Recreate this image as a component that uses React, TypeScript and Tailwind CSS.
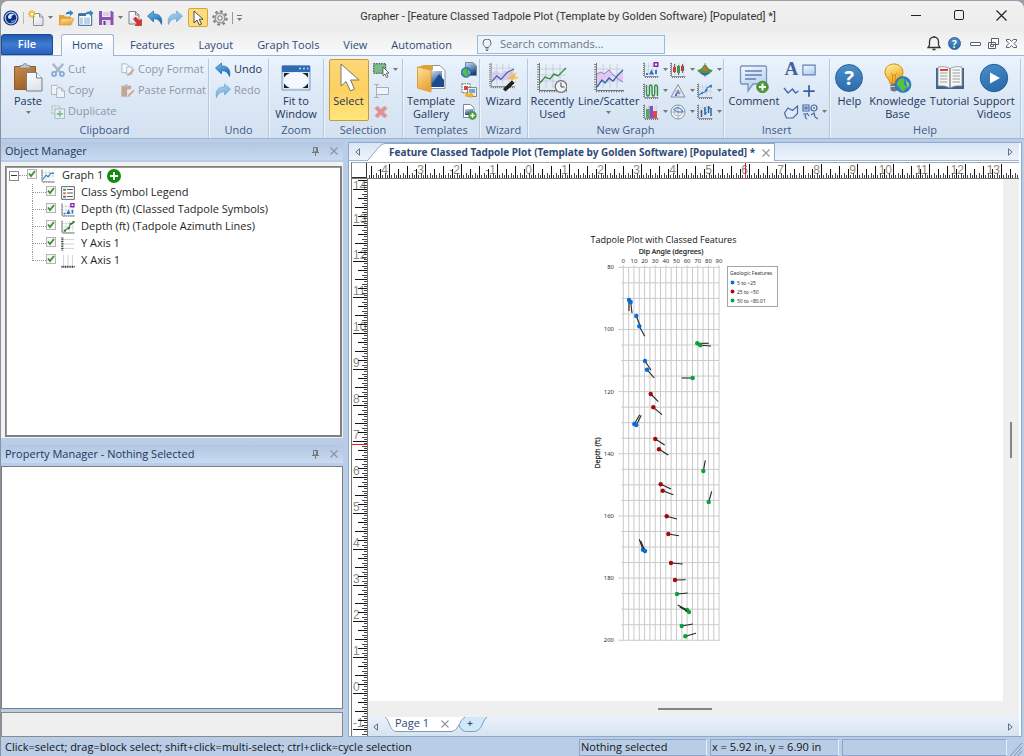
import { useLayoutEffect, useRef, useState, type ReactNode } from 'react';
import clsx from 'clsx';

/* ---------- icons ---------- */

interface IconProps {
  children: ReactNode;
  size?: 'sm' | 'md' | 'lg';
  dim?: boolean;
}

function Icon({ children, size = 'md', dim }: IconProps) {
  return (
    <svg
      aria-hidden="true"
      viewBox={size === 'lg' ? '0 0 30 30' : '0 0 16 16'}
      className={clsx('shrink-0', size === 'lg' ? 'size-[30px]' : size === 'md' ? 'size-4' : 'size-3.5', dim && 'opacity-50')}
      fill="none"
    >
      {children}
    </svg>
  );
}

function Gradients() {
  const list = [
    ['g-folder', '#ffe3a0', '#e8a63a'],
    ['g-clip', '#c98a4d', '#a06428'],
    ['g-paper', '#ffffff', '#dfe3ea'],
    ['g-rect', '#f4f9ff', '#b9d3ee'],
    ['g-bulb', '#fff6a8', '#f0a216'],
    ['g-arrow', '#7cc3ee', '#1c6cb5'],
    ['g-arrow2', '#b9dcf3', '#6ea7d6'],
    ['g-speech', '#f4f9ff', '#b9cdea'],
    ['g-help', '#4a90cb', '#2b6cab'],
    ['g-photo', '#cfe6f8', '#17407c'],
  ];
  return (
    <svg aria-hidden="true" className="absolute size-0">
      <defs>
        {list.map(([id, from, to]) => (
          <linearGradient key={id} id={id} x1="0" y1="0" x2="0.4" y2="1">
            <stop offset="0" stopColor={from} />
            <stop offset="1" stopColor={to} />
          </linearGradient>
        ))}
      </defs>
    </svg>
  );
}

const undoPath = 'M.5 6 6.500 1v3C12 3.500 16 7 14.500 14.500 13 10.500 10.500 8.500 6.500 8.800V12z';
const redoPath = 'M15.500 6 9.500 1v3C4 3.500 0 7 1.500 14.500 3 10.500 5.500 8.500 9.500 8.800V12z';
const cursorPath = 'M4 1v12l3-3 2.3 5 2.2-1-2.3-4.8H13z';

const UndoIcon = () => (
  <Icon><path d={undoPath} fill="url(#g-arrow)" stroke="#1f66a8" strokeWidth=".7" /></Icon>
);
const RedoIcon = () => (
  <Icon><path d={redoPath} fill="url(#g-arrow2)" stroke="#6fa2cf" strokeWidth=".7" /></Icon>
);

const LogoIcon = () => (
  <Icon>
    <circle cx="8" cy="8" r="7.6" fill="#16307e" />
    <circle cx="8" cy="8" r="6.4" fill="#a9c9e6" />
    <circle cx="8" cy="8" r="5.2" fill="#0d2a86" />
    <path d="M5 7C5 4 9 2.6 11.5 5 9 4.6 8.3 6 8.6 8 7 9.5 5 9 5 7z" fill="#d3ecfb" />
    <path d="M8 12.5c2.5.3 4.6-1.3 5-4-1.2 1.6-3 2.4-5 2z" fill="#4f8fd8" />
  </Icon>
);
const NewIcon = () => (
  <Icon>
    <path d="M5.5 3.5h6l3.500 3.500v8.500H5.500z" fill="url(#g-paper)" stroke="#8a8f98" />
    <path d="M11.500 3.500V7H15" stroke="#8a8f98" />
    <path d="M4 0v8M0 4h8M1.200 1.200l5.600 5.600M6.800 1.200 1.200 6.800" stroke="#e8b21c" strokeWidth="1.300" />
    <circle cx="4" cy="4" r="1.500" fill="#fff" />
  </Icon>
);
const OpenIcon = () => (
  <Icon>
    <path d="M1 5h5l1 1.500h6V15H1z" fill="#e6a23a" />
    <path d="M3.500 8.500H16L13 15H1z" fill="url(#g-folder)" stroke="#d8952d" strokeWidth=".6" />
    <path d="M7.500 4.500C8 2 10 1 12 1.500V0l3.500 3-3.500 3V4.200c-1.500-.5-3-.4-4.500.3z" fill="#2f86c6" />
  </Icon>
);
const OpenTemplateIcon = () => (
  <Icon>
    <path d="M.7 3.700h13v11.600H.7z" fill="#fff" stroke="#34618f" />
    <path d="M1 4h7v2H1z" fill="#3d6fa3" />
    <path d="M2 7.500h3v6.500H2zM6 7.500h6V14H6z" fill="#b9d3ea" />
    <path d="M7 4.500C7.500 2 10 1 12 1.500V0l3.500 3-3.500 3V4.200c-2-.5-3-.4-5 .3z" fill="#2f86c6" />
  </Icon>
);
const SaveIcon = () => (
  <Icon>
    <path d="M1 1h13l1.500 1.500V15H1z" fill="#8a55ad" />
    <path d="M4 1h8.500v6H4z" fill="#f1e9f6" />
    <path d="M5 3h6.500M5 5h6.500" stroke="#c9b4d8" />
    <path d="M4 10h8.500v5H4z" fill="#e4d8ec" />
    <path d="M5.500 11h2v4h-2z" fill="#6a3b8c" />
  </Icon>
);
const ExportIcon = () => (
  <Icon>
    <path d="M2 1.500h6.500L12 5v9H2z" fill="url(#g-paper)" stroke="#7d828c" />
    <path d="M8.500 1.500V5H12" stroke="#7d828c" />
    <path d="m6.500 9 2-2 4 4L14.500 9v6.500H8l2-2z" fill="#e0302c" stroke="#a81716" strokeWidth=".6" />
  </Icon>
);
const CursorIcon = () => (
  <Icon><path d={cursorPath} fill="#fff" stroke="#3a3a3a" strokeWidth=".9" /></Icon>
);
const GearIcon = () => (
  <Icon>
    <circle cx="8" cy="8" r="6.700" stroke="#777" strokeWidth="2" strokeDasharray="2.600 2.660" />
    <circle cx="8" cy="8" r="5" fill="#ddd" stroke="#777" strokeWidth="1" />
    <circle cx="8" cy="8" r="2.200" fill="#f3f3f3" stroke="#777" />
  </Icon>
);

const PasteIcon = () => (
  <Icon size="lg">
    <path d="M1.500 3.500h21v23h-21z" fill="url(#g-clip)" stroke="#8a5a2a" />
    <path d="M7 5V2.500h3a2 2 0 0 1 4 0h3V5z" fill="#c3c8cf" stroke="#7d828a" strokeWidth=".8" />
    <path d="M13.500 9.500h10l5.500 5.500v13H13.500z" fill="url(#g-paper)" stroke="#777e89" />
    <path d="M23.500 9.500V15H29" fill="#fff" stroke="#777e89" />
  </Icon>
);
const CutIcon = () => (
  <Icon size="sm" dim>
    <path d="M2 1 11 11M14 1 5 11" stroke="#6b7f99" strokeWidth="2.600" />
    <circle cx="3.500" cy="12.500" r="2.300" stroke="#2d68b5" strokeWidth="2" />
    <circle cx="12.500" cy="12.500" r="2.300" stroke="#2d68b5" strokeWidth="2" />
  </Icon>
);
const CopyIcon = () => (
  <Icon size="sm" dim>
    <path d="M.5 1.500H7L9.500 4v8h-9z" fill="#fff" stroke="#6f7680" />
    <path d="M6.500 4.500H12L15.500 8v7.500h-9z" fill="#fff" stroke="#6f7680" />
    <path d="M12 4.500V8h3.500" stroke="#6f7680" />
  </Icon>
);
const DuplicateIcon = () => (
  <Icon size="sm" dim>
    <path d="M1 1h9v9H1z" stroke="#777" strokeDasharray="2 1" />
    <path d="M4.500 4.500h11v11h-11z" fill="#f3fbf3" stroke="#6a7d74" />
    <path d="M10 6.500v7M6.500 10h7" stroke="#2f9437" strokeWidth="2" />
  </Icon>
);
const CopyFormatIcon = () => (
  <Icon size="sm" dim>
    <path d="M1 1h5.500L9 3.500V11H1z" fill="#fff" stroke="#6f7680" />
    <path d="M6.500 4.500h6V13h-6z" fill="#fff" stroke="#6f7680" />
    <path d="m7 15.500 1.500-3.500L14 6.500 15.500 8 10 13.500z" fill="#c9544d" />
  </Icon>
);
const PasteFormatIcon = () => (
  <Icon size="sm" dim>
    <path d="M.5 2h11v12.500H.5z" fill="#a9672c" />
    <path d="M4 .5h4v3H4z" fill="#8c929a" />
    <path d="M7 6h7v8.500H7z" fill="#e9edf2" />
    <path d="m7 15.500 1.500-3.500L14 6.500 15.500 8 10 13.500z" fill="#c9544d" />
  </Icon>
);
const FitIcon = () => (
  <Icon size="lg">
    <path d="M1 3h28v24H1z" fill="#d6e4f5" stroke="#7c9cc4" />
    <path d="M1 3.500Q1 2.500 2 2.500h26q1 0 1 1V9H1z" fill="#2f6bb0" />
    <path d="M18 5.500h2M22 5.500h2M26 5.500h1.500" stroke="#bcd6f2" strokeWidth="1.300" />
    <path d="M3 10h24v15H3z" fill="#1e1e1e" />
    <path d="M15 9.500c8 0 12.500 3.500 12.500 8S23 25.500 15 25.500 2.500 22 2.500 17.500s4.500-8 12.500-8z" fill="#f2f8ff" />
    <path d="M9 10h12l6 5v5l-6 5H9l-6-5v-5z" fill="#f5f9ff" />
  </Icon>
);
const SelectIcon = () => (
  <Icon size="lg">
    <path d="M7 1v22l5-4.500L16.500 28l4-2-4-9h8.500z" fill="#fff" stroke="#6a6a6a" strokeWidth=".9" />
  </Icon>
);
const BlockSelectIcon = () => (
  <Icon>
    <path d="M.7 1.700h12v9.600H.7z" fill="#7fb98c" stroke="#2b4a30" strokeDasharray="1.500 1" />
    <path d="M10 5v9l2-2 1.500 3.500 1.500-.8L13.500 11H16z" fill="#fff" stroke="#333" strokeWidth=".7" />
  </Icon>
);
const RenameIcon = () => (
  <Icon dim>
    <path d="M3.500 4.500h12v7h-12z" fill="#fff" stroke="#777" />
    <path d="M3.500 1.500v13M1 1.500h5M1 14.500h5" stroke="#777" />
  </Icon>
);
const DeleteIcon = () => (
  <Icon dim><path d="M2 4.500 4.500 2 8 5.500 11.500 2 14 4.500 10.500 8l3.500 3.500-2.500 2.500L8 10.500 4.500 14 2 11.500 5.500 8z" fill="#e63b3b" stroke="#d66" /></Icon>
);
const GalleryIcon = () => (
  <Icon size="lg">
    <path d="M9 2.500h15l5 5v18H9z" fill="#fff" stroke="#8b939f" />
    <path d="M13 8h13v15H13z" fill="url(#g-photo)" />
    <path d="m14 24 9-13 5 6v7z" fill="#1b4b8e" />
    <path d="M1.500 4 8 2h9v5l-2 1v20L1.500 25z" fill="#e0a23a" />
    <path d="M1.500 4 15 7v22L1.500 25z" fill="url(#g-folder)" stroke="#d8952d" strokeWidth=".8" />
  </Icon>
);
const Globe = ({ cx, cy, r }: { cx: number; cy: number; r: number }) => (
  <g>
    <circle cx={cx} cy={cy} r={r} fill="#2f7dd0" stroke="#1d5597" strokeWidth=".5" />
    <path
      d={`M${cx - r * 0.8} ${cy}q${r * 0.3} ${-r} ${r} ${-r * 0.7}l${-r * 0.1} ${r * 0.7}l${r * 0.4} ${r * 0.3}l${-r * 0.5} ${r * 0.6}z`}
      fill="#5cc13a"
    />
    <path d={`M${cx + r * 0.3} ${cy - r * 0.6}l${r * 0.5} ${r * 0.5}l${-r * 0.2} ${r * 0.6}z`} fill="#8ad957" />
  </g>
);
const GlobeFileIcon = () => (
  <Icon>
    <path d="M4.500.5H12L15.500 4v9.500h-11z" fill="url(#g-photo)" stroke="#7b8796" />
    <Globe cx={5} cy={10.5} r={5} />
  </Icon>
);
const SwapFileIcon = () => (
  <Icon>
    <path d="M1 .8h8v9H1z" fill="#fff" stroke="#555" strokeDasharray="1.500 1" />
    <path d="M6.500 4.500h9v9h-9z" fill="#e9f0f7" stroke="#888" />
    <path d="M8 6h6v4H8z" fill="#6fa6d6" />
    <path d="M3 3h4v4H3z" fill="#d04a45" />
    <path d="M4 10.500h5V8.500l4 3.500-4 3.500v-2H4z" fill="#f0b52b" />
  </Icon>
);
const AddFileIcon = () => (
  <Icon>
    <path d="M2.500.5h7L13 4v9.500H2.500z" fill="#fff" stroke="#7b8796" />
    <path d="M4 5h8v6H4z" fill="url(#g-photo)" />
    <circle cx="11.500" cy="11.500" r="4.200" fill="#4f9a3a" />
    <path d="M11.500 9.300v4.400M9.300 11.500h4.400" stroke="#fff" strokeWidth="1.500" />
  </Icon>
);

const PlotFrame = () => (
  <>
    <path d="M3 6h26M3 12h26M3 18h26M9 1v24M16 1v24M23 1v24" stroke="#c5cbd4" strokeWidth=".9" />
    <path d="M2.500 0v27.500H30" stroke="#777" />
    <path d="M1 1v26M2 28.500h28" stroke="#666" strokeWidth="1.600" strokeDasharray="1 1.500" />
  </>
);
const WizardIcon = () => (
  <Icon size="lg">
    <g transform="scale(.86)">
      <PlotFrame />
      <path d="m3 13 5-5 6 5 5-5 5 3 5-5v14H3z" fill="#d9c0ee" opacity=".8" />
      <path d="m3 22 6-7 5 4 7-8 8-4" stroke="#3a6ea8" strokeWidth="1.500" />
    </g>
    <path d="m22 8 1.500 4L28 9l-2 4 4 2-4 1 2 3-4-2-2 3v-4l-4-1 4-2z" fill="#f6b93b" opacity=".85" />
    <path d="m14.500 26 10-9.500 2 2-10 9.500z" fill="#222" stroke="#111" />
    <path d="m23 17.500 2-2 2.500 2.500-2 2z" fill="#eee" />
  </Icon>
);
const RecentIcon = () => (
  <Icon size="lg">
    <PlotFrame />
    <path d="m3 20 5-6 5 2 4-5 4 2 8-8" stroke="#3f8a48" strokeWidth="1.400" />
    <circle cx="24" cy="23.500" r="5.800" fill="#f2f2f2" stroke="#6f7378" strokeWidth="1.300" />
    <path d="M24 19.500V24h3.500" stroke="#444" />
  </Icon>
);
const LineScatterIcon = () => (
  <Icon size="lg">
    <PlotFrame />
    <path d="m3 11 4-2 3 2 5-4 5 6 4 3 5 3V7l-5 7-4-3-6 9-4-4-4 4-3 2z" fill="#e0c8f3" />
    <path d="m3 11 4-2 3 2 5-4 5 6 4 3 5 3" stroke="#a76ed0" />
    <path d="m3 24 5-7 3 3 4-5 4 3 5-6 5-5" stroke="#2f64a4" strokeWidth="1.300" />
  </Icon>
);

const MiniFrame = () => (
  <>
    <path d="M2 4h13M2 8h13M5.500 1v12M9.500 1v12M13.500 1v12" stroke="#cdd2da" strokeWidth=".8" />
    <path d="M1.500.5v14H15.500" stroke="#8a8f96" />
    <path d="M.5 1v13M2 15.500h13.500" stroke="#777" strokeDasharray="1 1" />
  </>
);
const ClassIcon = ({ size = 'md' }: { size?: 'sm' | 'md' }) => (
  <Icon size={size}>
    <MiniFrame />
    <path d="M10.500 0h5v5h-5z" fill="#8a1fb2" /><path d="M12 1.500h2v2h-2z" fill="#fff" />
    <path d="m6 12.500 2.500-5 2.500 5z" fill="#2f6fc0" /><path d="M3 11h2v2H3zM12 8h2v4h-2z" fill="#3a78c4" />
  </Icon>
);
const BoxIcon = () => (
  <Icon>
    <MiniFrame />
    <path d="M4.500 2v9M8.500 3v10M12.500 2v9" stroke="#444" strokeWidth=".8" />
    <path d="M3 5h3v5H3z" fill="#d33" /><path d="M7 4h3v7H7z" fill="#3a9a4f" /><path d="M11 4h3v5h-3z" fill="#c43a3a" />
  </Icon>
);
const SurfaceIcon = () => (
  <Icon>
    <path d="M8 1v14M1 9l7-4 7 4-7 5z" stroke="#777" strokeWidth=".8" />
    <path d="M0 8q4 0 5.500-3 2.500-5 5 0Q12 8 16 8l-4 4q-4 2-8 0z" fill="#3f9b49" />
    <path d="M5 8q2-7 6 0-3 2-6 0z" fill="#e2682a" /><path d="M3 10q5 3 10 0l-3 3H6z" fill="#2f5fc0" />
  </Icon>
);
const WaveIcon = () => (
  <Icon><MiniFrame /><path d="M3.500 2v8q0 3 1.500 3T6.500 10V4q0-2 1.200-2T9 4v6q0 3 1.300 3t1.400-3V4q0-2 1.300-2t1.500 2v9" stroke="#2e8b3d" strokeWidth="1.300" /></Icon>
);
const TernaryIcon = () => (
  <Icon>
    <path d="M8 1.500 15 14H1z" stroke="#8a8f98" />
    <path d="M4.500 8h7M8 14 4.500 8M8 14l3.500-6" stroke="#b9bec6" strokeWidth=".7" />
    <path d="m8 6 2.500 5h-5z" fill="#9b7ac6" /><path d="M5 11h2v2H5z" fill="#3a78c4" />
  </Icon>
);
const StepIcon = () => (
  <Icon><MiniFrame /><path d="m2 12 3-2 3-1 2-4 5-3" stroke="#3f83c8" strokeWidth="1.300" /><path d="M4 9h2v2H4zM8 6h2.500v2.500H8zM12.500 2H15v2.500h-2.500z" fill="#3f83c8" /></Icon>
);
const BarIcon = () => (
  <Icon><MiniFrame /><path d="M3 5h3.500v9H3z" fill="#4caf50" /><path d="M6.500 2H10v12H6.500z" fill="#8350c8" /><path d="M10 7h4v7h-4z" fill="#e0484a" /></Icon>
);
const PolarIcon = () => (
  <Icon>
    <circle cx="8" cy="8" r="7" fill="#eef3f9" stroke="#87909c" />
    <circle cx="8" cy="8" r="4" stroke="#b0b7c2" />
    <path d="M1 8h14M8 1v14" stroke="#9aa5b4" strokeWidth=".8" />
    <path d="M8 8 3.500 5.500Q6 2.500 9.500 4 13 5.500 13 8z" stroke="#3f83c8" />
  </Icon>
);
const HighLowIcon = () => (
  <Icon><MiniFrame /><path d="M4.500 6v7M8 3v8M11.500 2v7M14 4v8M3.500 8H5M7 6h1M8 9h1.500M11 4h2" stroke="#24609f" strokeWidth="1.400" /></Icon>
);

const CommentIcon = () => (
  <Icon size="lg">
    <path d="M3 3h23q1.500 0 1.500 1.500v15q0 1.500-1.500 1.500H14l-5 7v-7H3q-1.500 0-1.500-1.500v-15Q1.500 3 3 3z" fill="url(#g-speech)" stroke="#7b93c2" strokeWidth="1.300" />
    <path d="M6 8h17M6 12h17M6 16h11" stroke="#5f7fb8" strokeWidth="1.500" />
    <circle cx="23.500" cy="24" r="5.800" fill="#4f9a34" stroke="#2f7420" strokeWidth=".7" />
    <path d="M23.500 20.500v7M20 24h7" stroke="#fff" strokeWidth="2" />
  </Icon>
);
const RectIcon = () => <Icon size="sm"><path d="M1 2.500h14v11H1z" fill="url(#g-rect)" stroke="#5f7fb5" strokeWidth="1.300" /></Icon>;
const PolylineIcon = () => <Icon><path d="m1 5 4 5 4.500-4 3 4L15.500 8" stroke="#4468a6" strokeWidth="1.400" /></Icon>;
const PlusIcon = () => <Icon size="sm"><path d="M8 1.500v13M1.500 8h13" stroke="#3a5f9f" strokeWidth="2" /></Icon>;
const PolygonIcon = () => <Icon><path d="m1.500 9 3.500-5 4.500 2.500L14.500 2v7.500L10 14H3.500z" fill="#dfe9f7" stroke="#4468a6" strokeWidth="1.200" /></Icon>;
const SymbolsIcon = () => (
  <Icon>
    <path d="M1 1h6v6H1zM3 3h2v2H3zM1 10h3q-2 3 1 5M5 9l2 3M9 11l3-2 1 4 3 2" stroke="#4468a6" strokeWidth="1.200" />
    <circle cx="12" cy="4" r="3" stroke="#4468a6" strokeWidth="1.200" /><circle cx="12" cy="4" r=".9" fill="#4468a6" />
  </Icon>
);

const HelpCircle = ({ small }: { small?: boolean }) => (
  <span
    className={clsx(
      'flex shrink-0 items-center justify-center rounded-full border border-[#2a5f96] bg-linear-to-b from-[#4a90cb] to-[#2b6cab] font-bold text-white',
      small ? 'size-[13px] text-[10px] leading-none' : 'size-7 text-[20px] leading-none',
    )}
  >
    ?
  </span>
);
const KnowledgeIcon = () => (
  <Icon size="lg">
    <path d="M11 1C5.500 1 2 4.500 2 9.500c0 5 4.500 6 5 11h8c.5-5 5-6 5-11C20 4.500 16.500 1 11 1z" fill="url(#g-bulb)" stroke="#d58a12" />
    <path d="M8 10l3 3 3-3M9.500 12v8M12.500 12v8" stroke="#d98f1c" />
    <path d="M7.500 21h7v6q-3.500 3-7 0z" fill="#6f7985" /><path d="M7.500 23.500h7" stroke="#c4cad2" />
    <Globe cx={20} cy={21.5} r={8} />
  </Icon>
);
const TutorialIcon = () => (
  <Icon size="lg">
    <path d="M1 5h28v21H1z" fill="#3d6592" />
    <path d="M3 4q7-1.500 12 1.500Q20 2.500 27 4v19q-7-1-12 2-5-3-12-2z" fill="#f7f7f5" stroke="#8b8b8b" strokeWidth=".8" />
    <path d="M15 5.500V25" stroke="#888" strokeWidth="1.500" />
    <path d="M5 10h7.500M5 13h7.500M5 16h7.500M5 19h7.500M17.500 7h7.500M17.500 10h7.500M17.500 13h7.500M17.500 16h7.500M17.500 19h7.500" stroke="#9aa0a8" strokeWidth="1.200" />
    <path d="M5 7h8" stroke="#d9433f" strokeWidth="2" />
  </Icon>
);
const VideoIcon = () => (
  <Icon size="lg">
    <circle cx="15" cy="15" r="13.700" fill="url(#g-help)" stroke="#2a5f96" />
    <path d="M11 9.500 21 15l-10 5.500z" fill="#fff" />
  </Icon>
);

/* ---------- ribbon parts ---------- */

const Caret = () => (
  <svg aria-hidden="true" viewBox="0 0 5 3" className="h-[3px] w-[5px] shrink-0"><path d="M0 0h5L2.500 3z" fill="#777" /></svg>
);

function Group({ label, width, children }: { label: string; width: string; children: ReactNode }) {
  return (
    <section aria-label={label} className={clsx('flex flex-col border-r border-[#b4c8e0] shadow-[1px_0_0_#eef4fb]', width)}>
      <div className="flex h-[63px] items-start justify-center">{children}</div>
      <div className="text-center leading-[15px] text-[#3e5a86]">{label}</div>
    </section>
  );
}

function BigButton({ icon, lines, caret, active }: { icon: ReactNode; lines: string[]; caret?: boolean; active?: boolean }) {
  return (
    <button
      className={clsx(
        'flex h-[62px] flex-col items-center rounded-[2px] border px-px pt-px',
        active ? 'w-10 border-[#c99b2e] bg-linear-to-b from-[#fdd779] via-[#fcd15f] to-[#ffe67e]' : 'border-transparent',
      )}
    >
      <span className="flex h-[33px] items-center">{icon}</span>
      {lines.map((line) => (
        <span key={line} className="leading-[13px] whitespace-nowrap">{line}</span>
      ))}
      {caret && <span className="flex h-2.5 items-center"><Caret /></span>}
    </button>
  );
}

function SmallButton({ icon, label, disabled, caret }: { icon: ReactNode; label: string; disabled?: boolean; caret?: boolean }) {
  return (
    <button disabled={disabled} className={clsx('flex h-[21px] items-center gap-[3px] whitespace-nowrap', disabled && 'text-[#8c97a7]')}>
      {icon}
      {label}
      {caret && <Caret />}
    </button>
  );
}

function IconButton({ icon, label, caret }: { icon: ReactNode; label: string; caret?: boolean }) {
  return (
    <button aria-label={label} className="flex h-[21px] items-center gap-1">
      {icon}
      {caret && <Caret />}
    </button>
  );
}

function Ribbon() {
  return (
    <div className="flex h-[84px] shrink-0 border-y border-[#9db5d3] bg-linear-to-b from-[#eaf3fd] via-[#dce8f5] to-[#d3e1f1] pt-[3px] pr-[3px] text-[#22365c]">
      <Group label="Clipboard" width="w-[208px]">
        <div className="flex w-full pl-2.5">
          <div className="w-10"><BigButton icon={<PasteIcon />} lines={['Paste']} caret /></div>
          <div className="w-[70px]">
            <SmallButton icon={<CutIcon />} label="Cut" disabled />
            <SmallButton icon={<CopyIcon />} label="Copy" disabled />
            <SmallButton icon={<DuplicateIcon />} label="Duplicate" disabled />
          </div>
          <div>
            <SmallButton icon={<CopyFormatIcon />} label="Copy Format" disabled />
            <SmallButton icon={<PasteFormatIcon />} label="Paste Format" disabled />
          </div>
        </div>
      </Group>
      <Group label="Undo" width="w-[60px]">
        <div>
          <SmallButton icon={<UndoIcon />} label="Undo" />
          <SmallButton icon={<RedoIcon />} label="Redo" disabled />
        </div>
      </Group>
      <Group label="Zoom" width="w-[55px]">
        <BigButton icon={<FitIcon />} lines={['Fit to', 'Window']} />
      </Group>
      <Group label="Selection" width="w-[79px]">
        <div className="flex gap-1">
          <BigButton icon={<SelectIcon />} lines={['Select']} active />
          <div>
            <IconButton icon={<BlockSelectIcon />} label="Block select" caret />
            <IconButton icon={<RenameIcon />} label="Rename" />
            <IconButton icon={<DeleteIcon />} label="Delete" />
          </div>
        </div>
      </Group>
      <Group label="Templates" width="w-[77px]">
        <div className="flex gap-1">
          <BigButton icon={<GalleryIcon />} lines={['Template', 'Gallery']} />
          <div>
            <IconButton icon={<GlobeFileIcon />} label="Online templates" />
            <IconButton icon={<SwapFileIcon />} label="Replace template" />
            <IconButton icon={<AddFileIcon />} label="Add template" />
          </div>
        </div>
      </Group>
      <Group label="Wizard" width="w-[48px]">
        <BigButton icon={<WizardIcon />} lines={['Wizard']} />
      </Group>
      <Group label="New Graph" width="w-[196px]">
        <div className="flex">
          <BigButton icon={<RecentIcon />} lines={['Recently', 'Used']} />
          <BigButton icon={<LineScatterIcon />} lines={['Line/Scatter']} caret />
          <div className="ml-0.5 grid grid-cols-3 gap-x-0.5">
            <IconButton icon={<ClassIcon />} label="Class plot" caret />
            <IconButton icon={<BoxIcon />} label="Box plot" caret />
            <IconButton icon={<SurfaceIcon />} label="Surface" caret />
            <IconButton icon={<WaveIcon />} label="Function plot" caret />
            <IconButton icon={<TernaryIcon />} label="Ternary plot" caret />
            <IconButton icon={<StepIcon />} label="Step plot" caret />
            <IconButton icon={<BarIcon />} label="Bar chart" caret />
            <IconButton icon={<PolarIcon />} label="Polar plot" caret />
            <IconButton icon={<HighLowIcon />} label="High low plot" caret />
          </div>
        </div>
      </Group>
      <Group label="Insert" width="w-[106px]">
        <div className="flex gap-0.5">
          <BigButton icon={<CommentIcon />} lines={['Comment']} />
          <div className="grid grid-cols-[16px_24px] gap-x-[3px]">
            <button aria-label="Text" className="flex h-[21px] w-4 items-center justify-center font-['Liberation_Serif',serif] text-[19px] font-bold text-[#3f62a0]">A</button>
            <IconButton icon={<RectIcon />} label="Rectangle" />
            <IconButton icon={<PolylineIcon />} label="Polyline" />
            <IconButton icon={<PlusIcon />} label="Symbol" />
            <IconButton icon={<PolygonIcon />} label="Polygon" />
            <IconButton icon={<SymbolsIcon />} label="Shapes" caret />
          </div>
        </div>
      </Group>
      <Group label="Help" width="flex-1">
        <div className="flex">
          <div className="mr-0.5"><BigButton icon={<HelpCircle />} lines={['Help']} /></div>
          <BigButton icon={<KnowledgeIcon />} lines={['Knowledge', 'Base']} />
          <BigButton icon={<TutorialIcon />} lines={['Tutorial']} />
          <BigButton icon={<VideoIcon />} lines={['Support', 'Videos']} />
        </div>
      </Group>
    </div>
  );
}

/* ---------- title bar ---------- */

function TitleBar() {
  return (
    <header className="flex h-[33px] shrink-0 items-center">
      <div className="flex w-[241px] shrink-0 items-center justify-between pl-[2px]">
        <LogoIcon />
        <span className="h-3 w-px bg-[#bbb]" />
        <button aria-label="New"><NewIcon /></button>
        <Caret />
        <button aria-label="Open"><OpenIcon /></button>
        <button aria-label="Open template"><OpenTemplateIcon /></button>
        <button aria-label="Save"><SaveIcon /></button>
        <Caret />
        <button aria-label="Export"><ExportIcon /></button>
        <button aria-label="Undo"><UndoIcon /></button>
        <button aria-label="Redo"><RedoIcon /></button>
        <button aria-label="Select" className="flex h-[19px] w-5 items-center justify-center rounded-[2px] border border-[#d3a53a] bg-[#fddc7c]"><CursorIcon /></button>
        <button aria-label="Settings"><GearIcon /></button>
        <span className="h-3 w-px bg-[#999]" />
        <button aria-label="Customize" className="flex flex-col items-center gap-0.5"><span className="h-px w-[5px] bg-[#777]" /><Caret /></button>
      </div>
      <h1 className="flex-1 truncate text-center font-['Roboto','Open_Sans',sans-serif] text-[#333]">
        Grapher - [Feature Classed Tadpole Plot (Template by Golden Software) [Populated] *]
      </h1>
      <div className="flex h-7 shrink-0 items-center self-start pr-px">
        <button aria-label="Minimize" className="flex w-[43px] justify-center"><span className="h-px w-2.5 bg-[#222]" /></button>
        <button aria-label="Maximize" className="flex w-[43px] justify-center"><span className="size-2.5 rounded-[2px] border border-[#222]" /></button>
        <button aria-label="Close" className="flex w-[43px] justify-center">
          <svg viewBox="0 0 11 11" className="size-[11px]"><path d="m.5.5 10 10m0-10-10 10" stroke="#222" strokeWidth="1.200" /></svg>
        </button>
      </div>
    </header>
  );
}

const tabs = ['Features', 'Layout', 'Graph Tools', 'View', 'Automation'];

function TabBar() {
  return (
    <nav className="flex h-[21px] shrink-0 items-end text-[#2f4b76]">
      <button className="h-[21px] w-[52px] rounded-t-[3px] border border-[#1c4b97] bg-linear-to-b from-[#2159ad] via-[#3f7cd2] to-[#2a60bd] font-semibold text-white">File</button>
      <button className="z-10 -mb-px ml-2 h-[22px] w-[53px] rounded-t-[3px] border border-b-0 border-[#9db5d3] bg-linear-to-b from-white to-[#eaf3fd]">Home</button>
      <div className="ml-4 flex w-[322px] items-center justify-between">
        {tabs.map((tab) => (
          <button key={tab} className="h-5 whitespace-nowrap">{tab}</button>
        ))}
      </div>
      <label className="mb-px ml-[25px] flex h-[19px] w-[188px] items-center gap-2 border border-[#9fbad9] bg-[#eaf4fd] pl-1">
        <svg viewBox="0 0 10 12" className="h-3 w-2.5 shrink-0" fill="none" stroke="#666">
          <path d="M3.500 8.500C3 7 1 6.500 1 4a4 4 0 0 1 8 0c0 2.500-2 3-2.500 4.500zM3.500 10h3M4 11.500h2" />
        </svg>
        <input type="text" aria-label="Search commands" placeholder="Search commands..." className="min-w-0 flex-1 outline-none placeholder:text-[#6b7380]" />
      </label>
      <div className="mb-1 ml-auto flex items-center gap-[7px] pr-[7px]">
        <button aria-label="Notifications">
          <svg viewBox="0 0 14 15" className="h-[15px] w-3.5" fill="none" stroke="#333" strokeWidth="1.300">
            <path d="M1 11.500h12L11.500 9V5.500a4.500 4.500 0 0 0-9 0V9zM7 1V0M5.500 13.500h3" />
          </svg>
        </button>
        <button aria-label="Help"><HelpCircle small /></button>
        <button aria-label="Minimize document" className="ml-0.5 h-1 w-[11px] rounded-[1px] border border-[#555e70] bg-white" />
        <button aria-label="Restore document">
          <svg viewBox="0 0 11 11" className="size-[11px]" fill="#fff" stroke="#555e70"><path d="M3.500.5h7v6h-7zM.5 4.500h7v6h-7zM2.500 6.500h3v2h-3z" /></svg>
        </button>
        <button aria-label="Close document">
          <svg viewBox="0 0 11 9" className="h-[9px] w-[11px]" fill="#fff" stroke="#555e70"><path d="M.5.500h3l2 2 2-2h3v1.500L8 4.500l2.500 2.500v1.500h-3l-2-2-2 2h-3V7L3 4.500.5 2z" /></svg>
        </button>
      </div>
    </nav>
  );
}

/* ---------- left panels ---------- */

function PanelHeader({ title }: { title: string }) {
  return (
    <div className="flex h-[18px] shrink-0 items-center bg-linear-to-b from-[#b3c7e1] to-[#c8daf1] pr-[5px] pl-1 text-[#22365c]">
      <h2 className="flex-1">{title}</h2>
      <button aria-label={`Pin ${title}`} className="mr-[11px]">
        <svg viewBox="0 0 7 9" className="h-[9px] w-[7px]" fill="none" stroke="#777"><path d="M1.500.5h4v4.500h-4zM0 5.500h7M3.500 6v3M4.500 1v4" /></svg>
      </button>
      <button aria-label={`Close ${title}`}>
        <svg viewBox="0 0 8 8" className="size-2" stroke="#8d949e" strokeWidth="1.200"><path d="m.5.5 7 7m0-7-7 7" /></svg>
      </button>
    </div>
  );
}

const GraphIcon = () => (
  <Icon size="sm"><MiniFrame /><path d="m2 12 4-5 2 2 3-4h4" stroke="#3f83c8" strokeWidth="1.300" /></Icon>
);
const LegendIcon = () => (
  <Icon size="sm">
    <path d="M.7.7h14.600v14.600H.7z" fill="#fff" stroke="#555" />
    <path d="M7 4h6.500M7 8h6.500M7 12h6.500" stroke="#555" strokeWidth="1.300" />
    <path d="M2.500 3h3v2.500h-3z" fill="#2f9b3a" /><path d="M2.500 7h3v2.500h-3z" fill="#e07b22" /><path d="M2.500 11h3v2.500h-3z" fill="#2f6fc0" />
  </Icon>
);
const AzimuthIcon = () => (
  <Icon size="sm"><MiniFrame /><path d="m4 12 5-3 2-5h3" stroke="#2f7a37" strokeWidth="1.200" /><path d="M3 11h2.500v2.500H3zM7.500 8H10v2.500H7.500zM10 3h2.500v2.500H10zM13 1h2.500v2.500H13z" fill="#2f7a37" /></Icon>
);
const YAxisIcon = () => (
  <Icon size="sm"><path d="M2 3h13M2 8h13M2 13h13" stroke="#c5c9cf" /><path d="M1.500.5v15" stroke="#333" strokeWidth="2.400" strokeDasharray="1.300 .7" /></Icon>
);
const XAxisIcon = () => (
  <Icon size="sm"><path d="M3 1v12M8 1v12M13 1v12" stroke="#c5c9cf" /><path d="M.5 14.500h15" stroke="#333" strokeWidth="2.400" strokeDasharray="1.300 .7" /></Icon>
);

const treeItems = [
  { label: 'Class Symbol Legend', icon: <LegendIcon /> },
  { label: 'Depth (ft) (Classed Tadpole Symbols)', icon: <ClassIcon size="sm" /> },
  { label: 'Depth (ft) (Tadpole Azimuth Lines)', icon: <AzimuthIcon /> },
  { label: 'Y Axis 1', icon: <YAxisIcon /> },
  { label: 'X Axis 1', icon: <XAxisIcon /> },
];

function TreeCheck({ checked, onChange }: { checked: boolean; onChange: () => void }) {
  return (
    <span className="mb-1 grid size-2.5 shrink-0 place-items-center">
      <input
        type="checkbox"
        checked={checked}
        onChange={onChange}
        className="col-start-1 row-start-1 size-2.5 appearance-none border border-[#b5b5b5] bg-[#f6f6f6]"
      />
      {checked && (
        <svg viewBox="0 0 8 8" className="pointer-events-none col-start-1 row-start-1 size-2" fill="none"><path d="m1 3.500 2 2.500 4-5" stroke="#3c8f2f" strokeWidth="1.800" /></svg>
      )}
    </span>
  );
}

function ObjectTree() {
  const [hidden, setHidden] = useState<string[]>([]);
  const toggle = (name: string) =>
    setHidden((prev) => (prev.includes(name) ? prev.filter((n) => n !== name) : [...prev, name]));

  return (
    <div className="pl-[3px] text-[#1f1f1f]">
      <div className="flex h-[17px] items-center">
        <button aria-label="Collapse" className="flex size-2.5 items-center justify-center border border-[#8a8a8a]"><span className="h-px w-1.5 bg-[#333]" /></button>
        <span className="w-2 border-t border-dotted border-[#999]" />
        <label className="flex items-center">
          <TreeCheck checked={!hidden.includes('Graph 1')} onChange={() => toggle('Graph 1')} />
          <span className="mr-[7px] ml-1"><GraphIcon /></span>
          Graph 1
        </label>
        <button aria-label="Add to graph" className="ml-1">
          <svg viewBox="0 0 14 14" className="size-3.5"><circle cx="7" cy="7" r="7" fill="#138a10" /><path d="M7 3v8M3 7h8" stroke="#fff" strokeWidth="1.800" /></svg>
        </button>
      </div>
      <ul>
        {treeItems.map((item, i) => (
          <li key={item.label} className="flex h-[17px] pl-[23px]">
            <span className={clsx('border-l border-dotted border-[#999]', i === treeItems.length - 1 ? 'h-[9px]' : 'h-full')} />
            <span className="mt-2 w-[13px] shrink-0 border-t border-dotted border-[#999]" />
            <label className="flex items-center">
              <TreeCheck checked={!hidden.includes(item.label)} onChange={() => toggle(item.label)} />
              <span className="mr-[6px] ml-[5px] flex w-3.5">{item.icon}</span>
              {item.label}
            </label>
          </li>
        ))}
      </ul>
    </div>
  );
}

function LeftPanels() {
  return (
    <aside className="flex w-[342px] shrink-0 flex-col">
      <PanelHeader title="Object Manager" />
      <div className="mt-0.5 flex h-[276px] shrink-0 flex-col border border-[#f2f2f2] bg-[#f2f2f2] p-[3px] pr-0 pb-0">
        <div className="flex-1 border-t border-r-2 border-b-2 border-l border-[#808080] bg-white shadow-[inset_1px_1px_0_#999]">
          <ObjectTree />
        </div>
      </div>
      <div className="mt-[7px]"><PanelHeader title="Property Manager - Nothing Selected" /></div>
      <div className="mt-[3px] min-h-0 flex-1 border border-[#7d7d7d] bg-white" />
      <div className="mt-[3px] h-[25px] shrink-0 border border-[#8a8a8a] bg-[#efefef]" />
    </aside>
  );
}

/* ---------- rulers ---------- */

const INCH = 36;
const RULER = 15;

function tickLength(step: number) {
  if (step % 16 === 0) return 14;
  if (step % 8 === 0) return 12;
  if (step % 4 === 0) return 9;
  if (step % 2 === 0) return 5;
  return 3;
}

function range(from: number, to: number) {
  return Array.from({ length: Math.max(0, to - from + 1) }, (_, i) => from + i);
}

function useSize() {
  const ref = useRef<SVGSVGElement>(null);
  const [size, setSize] = useState({ width: 0, height: 0 });

  useLayoutEffect(() => {
    const el = ref.current;
    if (!el) return;
    const measure = () => {
      const box = el.getBoundingClientRect();
      setSize({ width: box.width, height: box.height });
    };
    measure();
    const observer = new ResizeObserver(measure);
    observer.observe(el);
    return () => observer.disconnect();
  }, []);

  return { ref, ...size };
}

function HorizontalRuler() {
  const { ref, width } = useSize();
  const zero = 166;
  // steps are sixteenths of an inch
  const steps = range(Math.ceil((-zero * 16) / INCH), Math.floor(((width - zero) * 16) / INCH));
  return (
    <svg ref={ref} className="block h-[15px] min-w-0 flex-1 bg-white font-['Liberation_Sans',sans-serif]" aria-label="Horizontal ruler">
      {steps.filter((s) => s % 16 === 0).map((s) => (
        <text key={s} x={zero + (s * INCH) / 16 - 1} y="11" textAnchor="end" fontSize="12" fill="#8f8880">{s / 16}</text>
      ))}
      {steps.map((s) => (
        <rect key={s} x={Math.round(zero + (s * INCH) / 16)} y={RULER - tickLength(s)} width="1" height={tickLength(s)} fill={s % 4 ? '#444' : '#111'} />
      ))}
      <rect x="378" y="0" width="1" height="15" fill="#e02020" />
    </svg>
  );
}

function VerticalRuler() {
  const { ref, height } = useSize();
  const zero = 514;
  const steps = range(Math.ceil(((zero - height) * 16) / INCH), Math.floor((zero * 16) / INCH));
  return (
    <svg ref={ref} className="block h-full w-[15px] shrink-0 bg-white font-['Liberation_Sans',sans-serif]" aria-label="Vertical ruler">
      {steps.filter((s) => s % 16 === 0).map((s) => (
        <text key={s} x="1" y={zero - (s * INCH) / 16 + (s === 224 ? 1 : -2)} fontSize="12" fill="#8f8880">{s / 16}</text>
      ))}
      {steps.map((s) => (
        <rect key={s} x={RULER - tickLength(s)} y={Math.round(zero - (s * INCH) / 16)} width={tickLength(s)} height="1" fill={s % 4 ? '#444' : '#111'} />
      ))}
      <rect x="0" y="265" width="15" height="1" fill="#e02020" />
    </svg>
  );
}

/* ---------- plot ---------- */

const BLUE = '#0a6cd6';
const RED = '#a30a10';
const GREEN = '#0c9f3c';

type Tadpole = [string, number, number, number, number];

// colour, head x, head y, tail x, tail y
const tadpoles: Tadpole[] = [
  [BLUE, 629, 300, 629, 311],
  [BLUE, 630.7, 302, 632, 313],
  [BLUE, 636.3, 316, 640, 325.7],
  [BLUE, 639.3, 326.3, 644.7, 336.3],
  [BLUE, 645, 361, 651, 370.3],
  [BLUE, 647, 369.7, 654.3, 378],
  [GREEN, 697.3, 343.3, 708.7, 343.3],
  [GREEN, 700.3, 345.3, 711, 346],
  [GREEN, 692.7, 378, 681.7, 378],
  [RED, 650.7, 394, 658.3, 401.7],
  [RED, 653.3, 407.3, 662, 414.7],
  [BLUE, 634.3, 424, 639.7, 414.7],
  [BLUE, 636.3, 425, 641.3, 415.3],
  [RED, 655.3, 439, 664.7, 445],
  [RED, 659, 449.3, 668.3, 455],
  [GREEN, 703.3, 471, 705.3, 460.3],
  [RED, 660.7, 484.3, 671, 489],
  [RED, 662.7, 490.7, 673.3, 494.7],
  [GREEN, 708.7, 502, 711.7, 491.3],
  [RED, 666.7, 516.3, 677, 519],
  [RED, 668.3, 534, 679, 535.7],
  [BLUE, 643, 549.7, 639.3, 539.3],
  [BLUE, 645, 551, 640.7, 541],
  [RED, 671, 563, 682.7, 564],
  [RED, 675, 580, 685.7, 579.7],
  [GREEN, 677, 594, 687.7, 593],
  [GREEN, 687, 610, 677.7, 605],
  [GREEN, 689, 612, 679.7, 607],
  [GREEN, 681.7, 626, 692.7, 624],
  [GREEN, 685.3, 636.3, 696, 633.3],
];

const legend = [
  { color: BLUE, text: '5 to <25' },
  { color: RED, text: '25 to <50' },
  { color: GREEN, text: '50 to <80.01' },
];

function TadpolePlot() {
  const left = 623.3;
  const top = 267.3;
  const dx = 10.64;
  const dy = 15.54;
  return (
    <svg viewBox="590 232 200 420" className="h-[420px] w-[200px] shrink-0 font-['Noto_Sans',sans-serif]" aria-label="Tadpole plot with classed features">
      <text x="663.500" y="243" textAnchor="middle" fontSize="9" fill="#111" className="font-['Open_Sans',sans-serif]">Tadpole Plot with Classed Features</text>
      <text x="671" y="254" textAnchor="middle" fontSize="7" fill="#222" stroke="#222" strokeWidth=".2">Dip Angle (degrees)</text>
      {Array.from({ length: 19 }, (_, i) => (
        <line key={i} x1={left + (i * dx) / 2} x2={left + (i * dx) / 2} y1={i % 2 ? top : top - 2} y2="641" stroke="#c9c9c9" />
      ))}
      {Array.from({ length: 25 }, (_, i) => (
        <line key={i} x1={i % 4 ? left - 2 : left - 5} x2={left + 9 * dx} y1={top + i * dy} y2={top + i * dy} stroke="#cbcbcb" />
      ))}
      {Array.from({ length: 10 }, (_, i) => (
        <text key={i} x={left + i * dx} y="263" textAnchor="middle" fontSize="6" fill="#333">{i * 10}</text>
      ))}
      {Array.from({ length: 7 }, (_, i) => (
        <text key={i} x="614" y={top + i * 4 * dy + 2} textAnchor="end" fontSize="6" fill="#333">{80 + i * 20}</text>
      ))}
      <text transform="translate(600 453) rotate(-90)" textAnchor="middle" fontSize="7" fill="#222" stroke="#222" strokeWidth=".2">Depth (ft)</text>
      {tadpoles.map(([color, x, y, tx, ty]) => (
        <g key={`${x}-${y}`}>
          <line x1={x} y1={y} x2={tx} y2={ty} stroke="#222" strokeWidth="1.100" />
          <circle cx={x} cy={y} r="2.200" fill={color} />
        </g>
      ))}
      <rect x="727.500" y="266.500" width="50" height="40" fill="#fff" stroke="#a5a5a5" />
      <text x="730" y="275" fontSize="5" fill="#333">Geologic Features</text>
      {legend.map((entry, i) => (
        <g key={entry.text}>
          <circle cx="732.500" cy={282.5 + i * 9} r="1.900" fill={entry.color} />
          <text x="737" y={284.5 + i * 9} fontSize="5" fill="#333">{entry.text}</text>
        </g>
      ))}
    </svg>
  );
}

/* ---------- document area ---------- */

const ScrollArrow = ({ left }: { left?: boolean }) => (
  <svg viewBox="0 0 5 8" className="h-2 w-[5px]" fill="none" stroke="#666f7d"><path d={left ? 'M4.500.8v6.400L.8 4z' : 'M.5.8v6.400L4.200 4z'} /></svg>
);
const CloseGlyph = () => (
  <svg viewBox="0 0 8 8" className="size-2" stroke="#9096a0" strokeWidth="1.200"><path d="m.5.5 7 7m0-7-7 7" /></svg>
);

function DocumentArea() {
  return (
    <main className="flex min-w-0 flex-1 flex-col border border-[#8ea9cb] bg-white pr-0.5">
      <div className="flex h-[18px] shrink-0 items-stretch border-b border-[#9db5d3] bg-linear-to-b from-[#dae6f4] to-[#edf4fc]">
        <button aria-label="Scroll tabs left" className="flex w-[18px] items-center pl-1.5"><ScrollArrow left /></button>
        <svg viewBox="0 0 18 18" className="-mb-px h-[18px] w-[18px]"><path d="M0 18 12 4Q15 .5 18 .5V18z" fill="#fff" /><path d="M0 18 12 4Q15 .5 18 .5" fill="none" stroke="#8ea9cb" /></svg>
        <div className="-mb-px flex items-center border-t border-r border-[#8ea9cb] bg-white pr-1 pl-1 font-['Noto_Sans',sans-serif] text-[10px] font-bold whitespace-nowrap text-[#2f4b76]">
          Feature Classed Tadpole Plot (Template by Golden Software) [Populated] *
          <button aria-label="Close tab" className="ml-[7px]"><CloseGlyph /></button>
        </div>
        <button aria-label="Scroll tabs right" className="ml-auto pr-1.5"><ScrollArrow /></button>
      </div>
      <div className="mt-px ml-0.5 flex shrink-0 border-y border-l border-t-[#a8a8a8] border-b-[#777] border-l-[#777]">
        <div className="size-[15px] shrink-0 border-r border-b border-[#333] bg-white" />
        <HorizontalRuler />
      </div>
      <div className="ml-0.5 flex min-h-0 flex-1 border-l border-[#777]">
        <div className="shrink-0 overflow-hidden border-r border-[#777]"><VerticalRuler /></div>
        <div className="flex min-w-0 flex-1 flex-col">
          <div className="flex min-h-0 flex-1">
            <div className="flex min-w-0 flex-1 items-start overflow-hidden bg-white pt-[53px] pl-[222px]">
              <TadpolePlot />
            </div>
            <div className="flex w-4 flex-col items-center bg-[#efefef] pt-[243px]"><span className="h-9 w-0.5 bg-[#858585]" /></div>
          </div>
          <div className="flex h-4 shrink-0 items-center bg-[#efefef] pl-[290px]"><span className="h-0.5 w-[54px] bg-[#858585]" /></div>
          <div className="flex h-[19px] shrink-0 items-stretch bg-linear-to-b from-[#e9f1fb] to-[#d6e3f1]">
            <button aria-label="Previous page" className="flex w-[17px] items-center pl-[5px]"><ScrollArrow left /></button>
            <svg viewBox="0 0 10 17" className="h-[15px] w-2.5" preserveAspectRatio="none"><path d="M0 0q2 1 4 7 3 9 6 9V0z" fill="#fff" /><path d="M0 0q2 1 4 7 3 9 6 9" fill="none" stroke="#7f9dc2" /></svg>
            <div className="flex h-[15px] items-center border-b border-[#7f9dc2] bg-white pb-0.5 text-[#2f4b76]">
              Page 1
              <button aria-label="Close page" className="ml-3 pt-0.5"><CloseGlyph /></button>
            </div>
            <button aria-label="Add page" className="flex">
              <svg viewBox="0 0 40 15" className="h-[15px] w-10">
                <path d="M0 0h16q-4 3-6 8-3 6.500-6 6.500H0z" fill="#fff" />
                <path d="M16 0h22q-3 3-5 8-3 6.500-8 6.500h-7Q12 14 10 8q3-5 6-8z" fill="#cfe9f8" />
                <path d="M0 14.500h3Q7 14 10 8q2-6 6-8M10 8q2 6.500 8 6.500h7q5 0 8-6.500 2-6 5-8" fill="none" stroke="#7f9dc2" />
                <path d="M21 4v5M18.500 6.500h5" stroke="#2f4b76" />
              </svg>
            </button>
            <button aria-label="Next page" className="ml-auto pr-1.5"><ScrollArrow /></button>
          </div>
        </div>
      </div>
    </main>
  );
}

function StatusBar() {
  const cell = 'flex h-[17px] items-center border border-[#8ba6c9] border-r-[#e6eef8] px-px whitespace-nowrap';
  return (
    <footer className="mt-px flex h-[18px] shrink-0 items-center gap-[3px] pt-px text-[#151515]">
      <span className="min-w-0 flex-1 truncate pl-1">Click=select; drag=block select; shift+click=multi-select; ctrl+click=cycle selection</span>
      <span className={clsx(cell, 'w-[128px]')}>Nothing selected</span>
      <span className={clsx(cell, 'w-[129px]')}>x = 5.92 in, y = 6.90 in</span>
      <span className={clsx(cell, 'w-[165px]')} />
      <svg viewBox="0 0 12 14" className="mr-0.5 h-3.5 w-3 self-end" stroke="#7f93b3"><path d="M0 14 12 1M4 14l8-9M8 14l4-5" /></svg>
    </footer>
  );
}

export default function App() {
  return (
    <div className="flex h-screen w-full flex-col overflow-hidden bg-[#9a9ea6] pt-px font-['Open_Sans','Noto_Sans',sans-serif] text-[11px]">
      <Gradients />
      <div className="flex min-h-0 flex-1 flex-col overflow-hidden rounded-t-lg border-l border-[#8793a5] bg-[#bacde6]">
        <div className="flex shrink-0 flex-col bg-linear-to-b from-[#f2f2f2] via-[#ececec] to-[#f9fafc]">
          <TitleBar />
          <TabBar />
        </div>
        <Ribbon />
        <div className="mt-[3px] flex min-h-0 flex-1 gap-[5px] pr-0.5">
          <LeftPanels />
          <DocumentArea />
        </div>
        <StatusBar />
      </div>
    </div>
  );
}
